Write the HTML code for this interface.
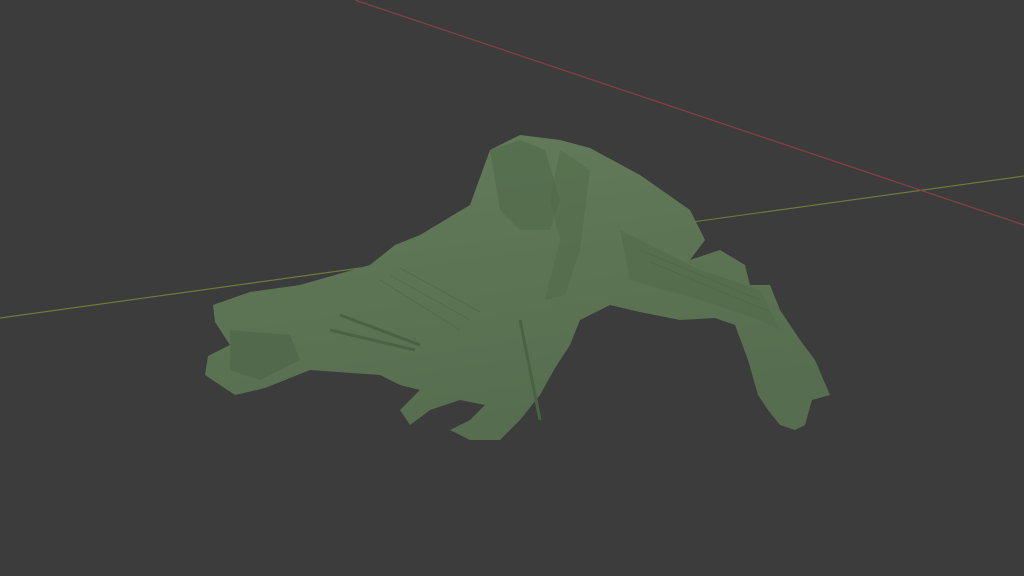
<!DOCTYPE html>
<html><head><meta charset="utf-8"><style>
html,body{margin:0;padding:0;background:#3c3c3c;overflow:hidden}
svg{display:block}
</style></head><body>
<svg width="1024" height="576" viewBox="0 0 1024 576" xmlns="http://www.w3.org/2000/svg">
<rect width="1024" height="576" fill="#3c3c3c"/>
<line x1="0" y1="318" x2="1024" y2="176" stroke="#6b7a3a" stroke-width="1.2"/>
<line x1="355" y1="0" x2="1024" y2="225" stroke="#8a3d4a" stroke-width="1.2"/>
<defs>
<linearGradient id="g" x1="0" y1="0" x2="0.3" y2="1">
<stop offset="0" stop-color="#647c5a"/><stop offset="1" stop-color="#566d4f"/>
</linearGradient>
</defs>
<path fill="url(#g)" d="M213,305 L250,292 L300,285 L370,265 L395,245 L420,235 L470,205 L490,150 L520,135 L560,140 L590,148 L640,175 L690,210 L705,240 L690,260 L720,250 L745,265 L750,285 L770,285 L780,310 L800,340 L815,360 L830,395 L812,400 L805,425 L795,430 L780,425 L768,410 L758,395 L748,360 L735,325 L715,318 L680,320 L640,312 L610,305 L580,320 L570,345 L555,368 L540,395 L520,420 L500,440 L470,440 L450,430 L470,420 L485,405 L460,400 L430,410 L410,425 L400,410 L420,390 L400,385 L380,375 L310,370 L265,388 L235,395 L205,375 L208,356 L230,345 L215,322 Z"/>
<path fill="#4f6848" opacity="0.55" d="M490,150 L520,140 L545,150 L560,200 L550,230 L520,230 L500,210 Z"/>
<path fill="#4f6848" opacity="0.45" d="M560,150 L590,170 L580,250 L565,295 L545,300 L560,240 L550,200 Z"/>
<path fill="#4f6848" opacity="0.45" d="M620,230 L700,270 L760,290 L780,330 L760,320 L700,300 L630,280 Z"/>
<path fill="#4a6244" opacity="0.5" d="M230,330 L290,335 L300,360 L260,380 L230,370 Z"/>
<path fill="none" stroke="#4a6244" stroke-width="3" d="M340,315 L420,345 M330,330 L415,350 M520,320 L540,420"/>
<g stroke="#4c6446" stroke-width="1" opacity="0.6">
<line x1="380" y1="280" x2="460" y2="330"/><line x1="390" y1="275" x2="470" y2="320"/>
<line x1="400" y1="268" x2="480" y2="312"/><line x1="640" y1="250" x2="760" y2="300"/>
<line x1="650" y1="262" x2="770" y2="312"/>
</g>
</svg>
</body></html>
